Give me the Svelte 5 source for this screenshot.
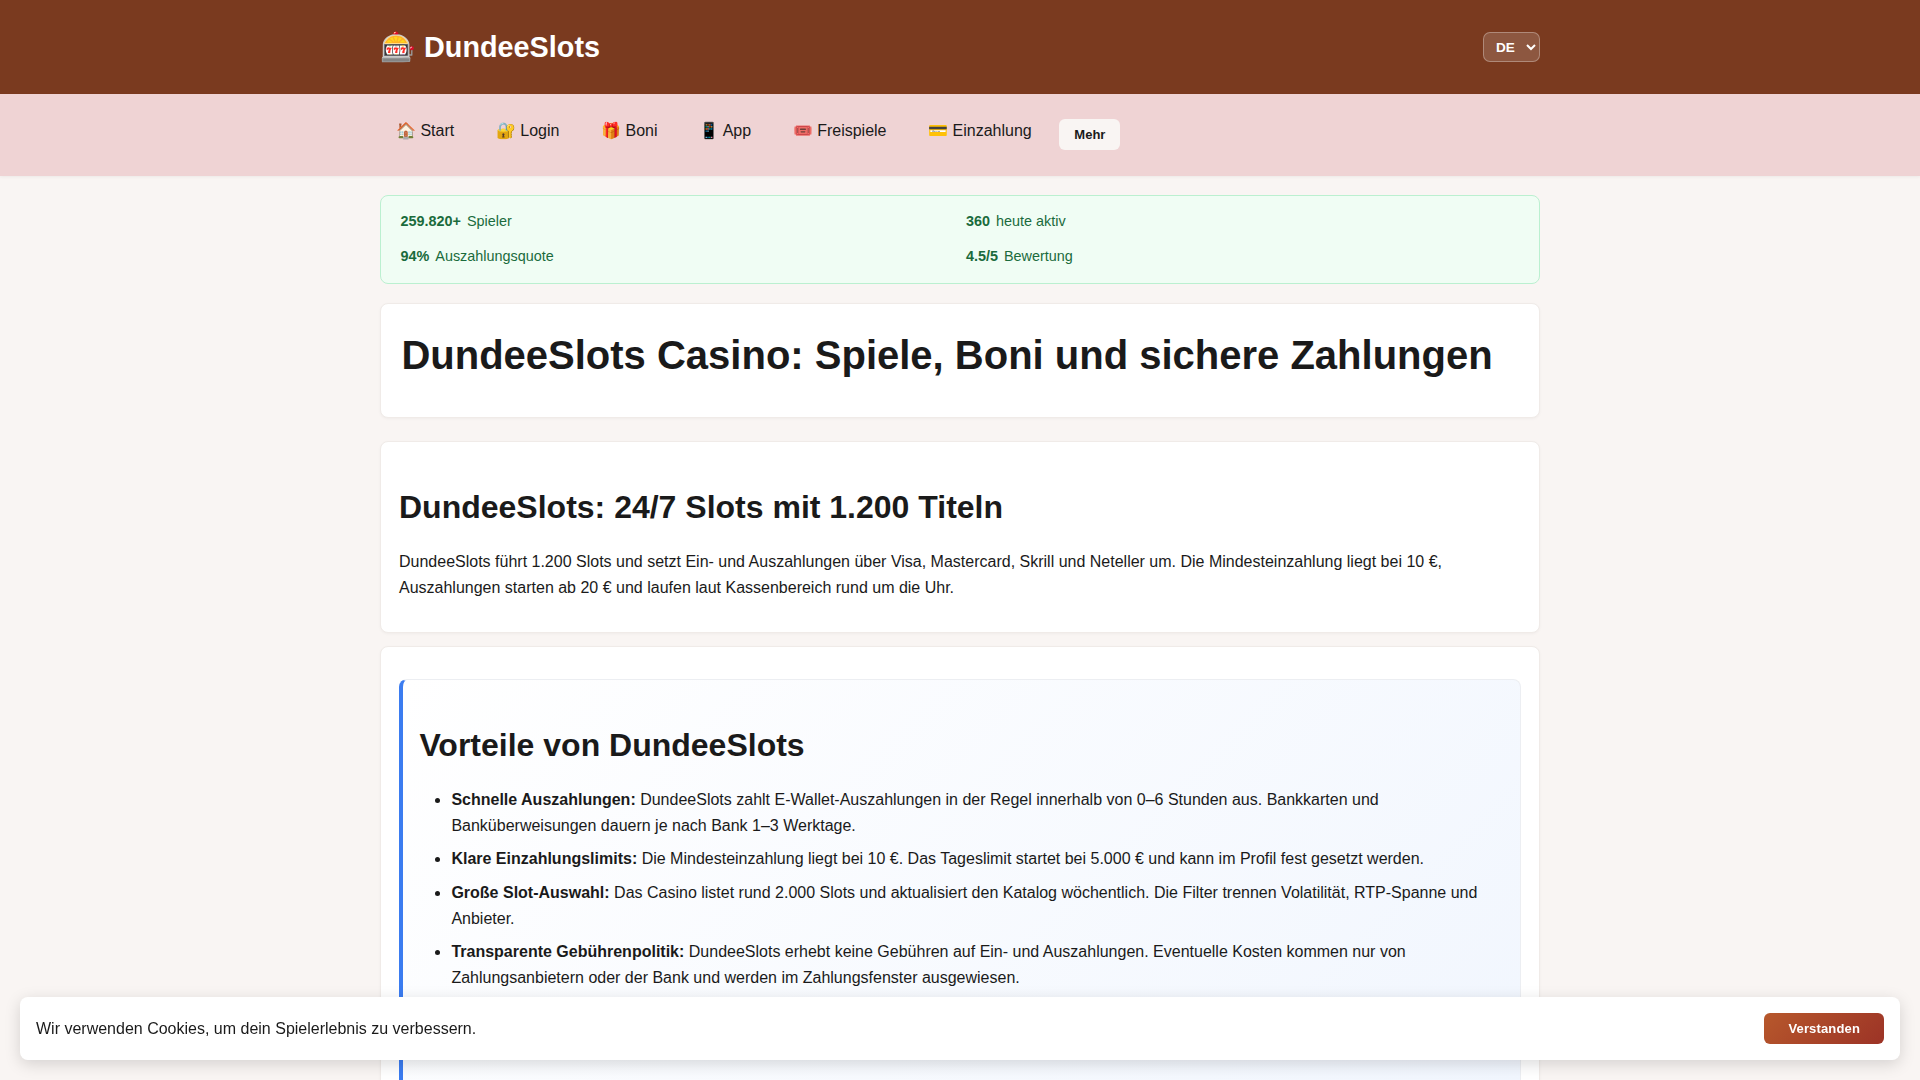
<script>
  let lang = $state('DE');
  let cookiesOk = $state(false);

  const links = ['🏠 Start', '🔐 Login', '🎁 Boni', '📱 App', '🎟️ Freispiele', '💳 Einzahlung'];

  const stats = [
    { value: '259.820+', label: 'Spieler' },
    { value: '360', label: 'heute aktiv' },
    { value: '94%', label: 'Auszahlungsquote' },
    { value: '4.5/5', label: 'Bewertung' }
  ];

  const perks = [
    {
      title: 'Schnelle Auszahlungen:',
      text: 'DundeeSlots zahlt E-Wallet-Auszahlungen in der Regel innerhalb von 0–6 Stunden aus. Bankkarten und Banküberweisungen dauern je nach Bank 1–3 Werktage.'
    },
    {
      title: 'Klare Einzahlungslimits:',
      text: 'Die Mindesteinzahlung liegt bei 10 €. Das Tageslimit startet bei 5.000 € und kann im Profil fest gesetzt werden.'
    },
    {
      title: 'Große Slot-Auswahl:',
      text: 'Das Casino listet rund 2.000 Slots und aktualisiert den Katalog wöchentlich. Die Filter trennen Volatilität, RTP-Spanne und Anbieter.'
    },
    {
      title: 'Transparente Gebührenpolitik:',
      text: 'DundeeSlots erhebt keine Gebühren auf Ein- und Auszahlungen. Eventuelle Kosten kommen nur von Zahlungsanbietern oder der Bank und werden im Zahlungsfenster ausgewiesen.'
    }
  ];
</script>

<header class="topbar">
  <div class="wrap topbar-row">
    <a class="logo" href="#top">🎰 DundeeSlots</a>
    <select class="lang" bind:value={lang}>
      <option>DE</option>
      <option>EN</option>
    </select>
  </div>
</header>

<nav class="mainnav">
  <div class="wrap nav-row">
    {#each links as link}
      <a class="nav-link" href="#top">{link}</a>
    {/each}
    <button class="more">Mehr</button>
  </div>
</nav>

<main class="wrap page">
  <section class="stats">
    {#each stats as s}
      <div class="stat"><strong>{s.value}</strong><span>{s.label}</span></div>
    {/each}
  </section>

  <section class="card hero">
    <h1>DundeeSlots Casino: Spiele, Boni und sichere Zahlungen</h1>
  </section>

  <section class="card intro">
    <h2>DundeeSlots: 24/7 Slots mit 1.200 Titeln</h2>
    <p>
      DundeeSlots führt 1.200 Slots und setzt Ein- und Auszahlungen über Visa, Mastercard, Skrill und
      Neteller um. Die Mindesteinzahlung liegt bei 10 €, Auszahlungen starten ab 20 € und laufen laut
      Kassenbereich rund um die Uhr.
    </p>
  </section>

  <section class="card perks-card">
    <div class="perks">
      <h2>Vorteile von DundeeSlots</h2>
      <ul>
        {#each perks as p}
          <li><strong>{p.title}</strong> {p.text}</li>
        {/each}
      </ul>
    </div>
  </section>
</main>

{#if !cookiesOk}
  <div class="cookie">
    <span>Wir verwenden Cookies, um dein Spielerlebnis zu verbessern.</span>
    <button class="accept" onclick={() => (cookiesOk = true)}>Verstanden</button>
  </div>
{/if}

<style>
  :global(body) {
    background: #f9f5f3;
    color: #1a1a1a;
    font-family: "Liberation Sans", Arial, sans-serif;
    font-size: 16px;
    line-height: 1.6;
  }

  .wrap {
    width: 1160px;
    margin: 0 auto;
  }

  .topbar {
    background: #7a3a1f;
    height: 94px;
    display: flex;
    align-items: center;
  }

  .topbar-row {
    display: flex;
    justify-content: space-between;
    align-items: center;
  }

  .logo {
    color: #fff;
    font-size: 28.8px;
    font-weight: 700;
    text-decoration: none;
  }

  .lang {
    width: 57px;
    height: 30px;
    padding: 0 8px;
    background: rgba(255, 255, 255, 0.15);
    border: 1px solid rgba(255, 255, 255, 0.3);
    border-radius: 7px;
    color: #fff;
    font-family: inherit;
    font-size: 13.6px;
    font-weight: 700;
  }

  .lang option {
    color: #1a1a1a;
  }

  .mainnav {
    background: #efd3d4;
    height: 82px;
    box-shadow: 0 1px 3px rgba(0, 0, 0, 0.05);
  }

  .nav-row {
    display: flex;
    align-items: center;
    gap: 9.6px;
    padding-top: 16px;
  }

  .nav-link {
    padding: 8px 16px;
    margin-bottom: 8px;
    color: #1a1a1a;
    text-decoration: none;
  }

  .more {
    margin-left: 2px;
    padding: 8px 15px;
    background: #f9f5f3;
    border: 0;
    border-radius: 6px;
    color: #1a1a1a;
    font-family: inherit;
    font-size: 13px;
    font-weight: 700;
  }

  .page {
    padding-top: 19px;
    display: flex;
    flex-direction: column;
  }

  .stats {
    display: grid;
    grid-template-columns: 1fr 1fr;
    gap: 12px;
    padding: 14.4px 19.5px;
    margin-bottom: 19px;
    background: #f0fdf4;
    border: 1px solid #bbf0d0;
    border-radius: 8px;
    color: #1a6b3c;
    font-size: 14.4px;
  }

  .stat {
    display: flex;
    gap: 6px;
  }

  .card {
    box-sizing: border-box;
    background: #fff;
    border: 1px solid #f0ebe8;
    border-radius: 8px;
    box-shadow: 0 1px 3px rgba(0, 0, 0, 0.04);
  }

  .hero {
    height: 115px;
    padding: 27.4px 20.4px;
    margin-bottom: 23px;
  }

  h1 {
    margin: 0;
    font-size: 40px;
    line-height: 1.2;
  }

  h2 {
    margin: 0;
    font-size: 32px;
    line-height: 1.2;
  }

  .intro {
    padding: 46px 18px 32px;
    margin-bottom: 13px;
  }

  .intro p {
    margin: 23px 0 0;
  }

  .perks-card {
    padding: 32px 18px;
  }

  .perks {
    padding: 46px 16.4px 90px;
    background: linear-gradient(135deg, #fff, #f1f6fe);
    border: 1px solid #eceef2;
    border-left: 4px solid #3b7cf0;
    border-radius: 8px;
  }

  ul {
    margin: 22.4px 0 0;
    padding-left: 32px;
  }

  li {
    margin-bottom: 8px;
  }

  .cookie {
    position: fixed;
    left: 20px;
    right: 20px;
    bottom: 20px;
    display: flex;
    justify-content: space-between;
    align-items: center;
    padding: 16px;
    background: #fff;
    border-radius: 8px;
    box-shadow: 0 4px 16px rgba(0, 0, 0, 0.15);
  }

  .accept {
    padding: 8px 24px;
    background: linear-gradient(135deg, #b7582c, #9c3326);
    border: 0;
    border-radius: 6px;
    color: #fff;
    font-family: inherit;
    font-size: 13px;
    font-weight: 700;
    letter-spacing: 0.15px;
  }
</style>
